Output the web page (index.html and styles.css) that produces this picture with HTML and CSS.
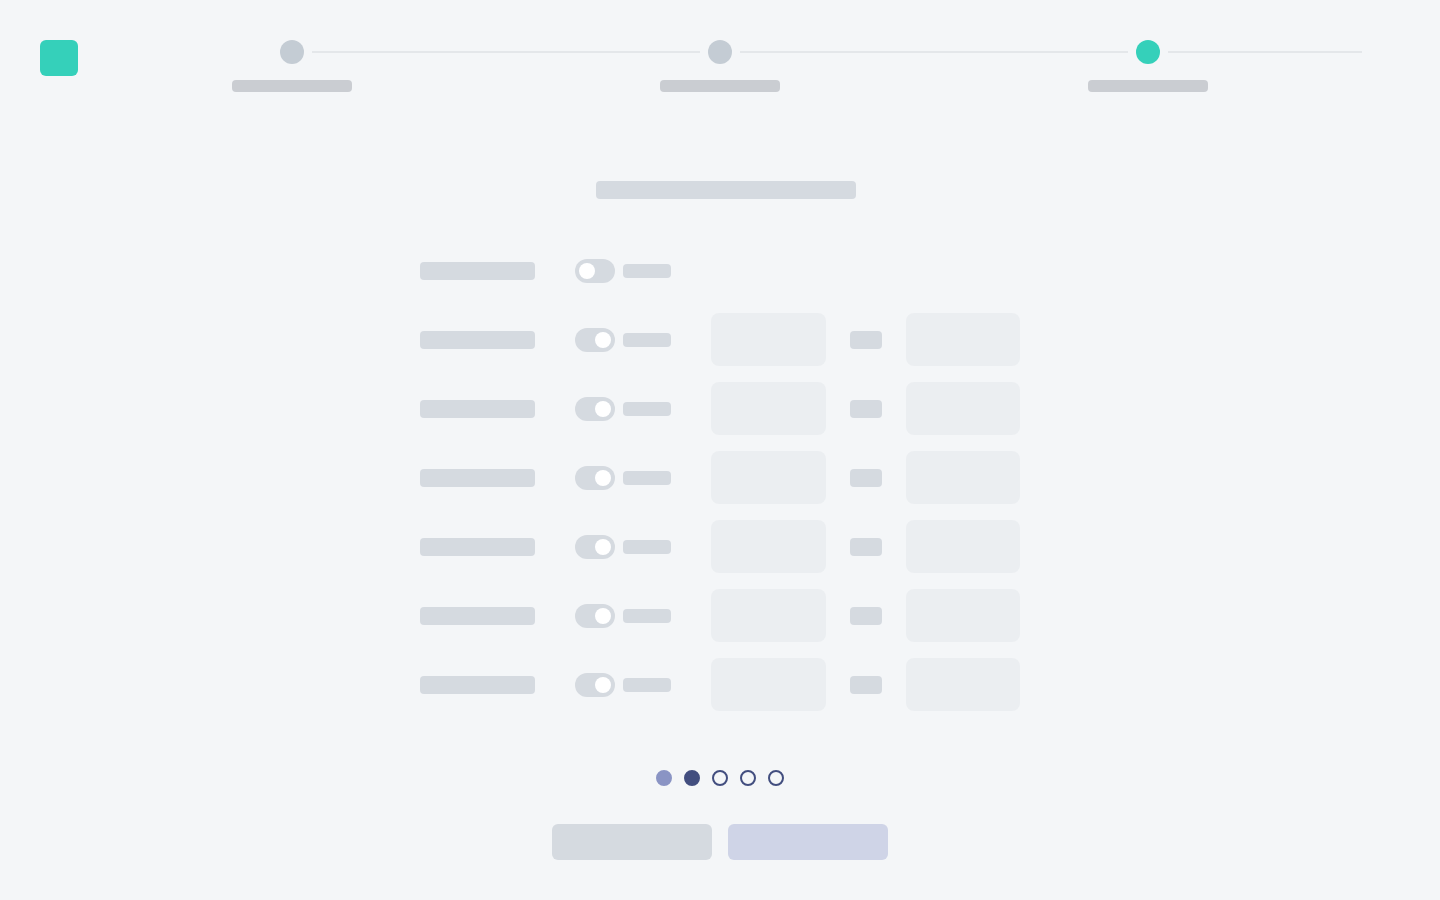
FILE: index.html
```html
<!DOCTYPE html>
<html lang="en">
<head>
  <meta charset="UTF-8">
  <meta name="viewport" content="width=device-width, initial-scale=1.0">
  <title>Opening hours</title>
  <link rel="stylesheet" href="styles.css">
</head>
<body>
  <header class="header">
    <div class="logo"></div>
    <ol class="steps">
      <li class="step"><span class="step-track"><i class="step-dot"></i></span><span class="step-label"></span></li>
      <li class="step"><span class="step-track"><i class="step-dot"></i></span><span class="step-label"></span></li>
      <li class="step active"><span class="step-track"><i class="step-dot"></i></span><span class="step-label"></span></li>
    </ol>
  </header>
  <form class="form">
    <div class="title"><span class="bar title-bar"></span></div>
    <div class="rows">
      <div class="row">
        <span class="bar"></span>
        <label class="toggle"><input type="checkbox" aria-label="Sunday"><span class="bar toggle-text"></span></label>
      </div>
      <div class="row">
        <span class="bar"></span>
        <label class="toggle"><input type="checkbox" aria-label="Monday" checked><span class="bar toggle-text"></span></label>
        <input class="field" aria-label="Monday from">
        <span class="bar"></span>
        <input class="field" aria-label="Monday to">
      </div>
      <div class="row">
        <span class="bar"></span>
        <label class="toggle"><input type="checkbox" aria-label="Tuesday" checked><span class="bar toggle-text"></span></label>
        <input class="field" aria-label="Tuesday from">
        <span class="bar"></span>
        <input class="field" aria-label="Tuesday to">
      </div>
      <div class="row">
        <span class="bar"></span>
        <label class="toggle"><input type="checkbox" aria-label="Wednesday" checked><span class="bar toggle-text"></span></label>
        <input class="field" aria-label="Wednesday from">
        <span class="bar"></span>
        <input class="field" aria-label="Wednesday to">
      </div>
      <div class="row">
        <span class="bar"></span>
        <label class="toggle"><input type="checkbox" aria-label="Thursday" checked><span class="bar toggle-text"></span></label>
        <input class="field" aria-label="Thursday from">
        <span class="bar"></span>
        <input class="field" aria-label="Thursday to">
      </div>
      <div class="row">
        <span class="bar"></span>
        <label class="toggle"><input type="checkbox" aria-label="Friday" checked><span class="bar toggle-text"></span></label>
        <input class="field" aria-label="Friday from">
        <span class="bar"></span>
        <input class="field" aria-label="Friday to">
      </div>
      <div class="row">
        <span class="bar"></span>
        <label class="toggle"><input type="checkbox" aria-label="Saturday" checked><span class="bar toggle-text"></span></label>
        <input class="field" aria-label="Saturday from">
        <span class="bar"></span>
        <input class="field" aria-label="Saturday to">
      </div>
    </div>
    <ol class="dots">
      <li class="dot done"></li>
      <li class="dot current"></li>
      <li class="dot"></li>
      <li class="dot"></li>
      <li class="dot"></li>
    </ol>
    <div class="actions">
      <button class="btn" type="button" aria-label="Back"></button>
      <button class="btn btn-next" aria-label="Next"></button>
    </div>
  </form>
</body>
</html>
```

FILE: styles.css
```css
* {
  box-sizing: border-box;
}
body {
  margin: 0;
  background: #f4f6f8;
  font-family: "Open Sans", sans-serif;
}
ol {
  list-style: none;
  margin: 0;
  padding: 0;
}

/* header */
.header {
  display: grid;
  grid-template-columns: 38px 1fr 38px;
  padding: 40px 40px 0;
}
.logo {
  height: 36px;
  border-radius: 6px;
  background: #35d0ba;
}
.steps {
  display: grid;
  grid-template-columns: repeat(3, 1fr);
}
.step {
  display: flex;
  flex-direction: column;
  align-items: center;
  gap: 16px;
}
.step-track {
  display: grid;
  grid-template-columns: 1fr 24px 1fr;
  column-gap: 8px;
  align-items: center;
  width: 100%;
}
.step-track::before,
.step-track::after {
  content: "";
  height: 2px;
  background: #e4e7ea;
}
.step:first-child .step-track::before {
  background: none;
}
.step-dot {
  height: 24px;
  border-radius: 50%;
  background: #c4ccd4;
}
.step.active .step-dot {
  background: #35d0ba;
}
.step-label {
  width: 120px;
  height: 12px;
  border-radius: 4px;
  background: #cacdd2;
}

/* form */
.form {
  max-width: 600px;
  margin: 0 auto;
  padding: 87px 0 40px;
}
.bar {
  height: 18px;
  border-radius: 4px;
  background: #d5dae0;
}
.title {
  display: flex;
  align-items: center;
  justify-content: center;
  height: 21px;
  margin-bottom: 44px;
  padding-left: 11px;
}
.title-bar {
  width: 260px;
}
.rows {
  display: flex;
  flex-direction: column;
  gap: 16px;
}
.row {
  display: grid;
  grid-template-columns: 115px 128px 1fr 32px 1fr;
  column-gap: 24px;
  align-items: center;
  min-height: 53px;
}
.toggle {
  display: flex;
  align-items: center;
  gap: 8px;
  padding-left: 16px;
}
.toggle input {
  appearance: none;
  display: flex;
  width: 40px;
  height: 24px;
  margin: 0;
  padding: 4px;
  border-radius: 12px;
  background: #d5dae0;
}
.toggle input::before {
  content: "";
  width: 16px;
  height: 16px;
  border-radius: 50%;
  background: #fff;
}
.toggle input:checked {
  justify-content: flex-end;
}
.toggle-text {
  width: 48px;
  height: 14px;
}
.field {
  width: 100%;
  height: 53px;
  padding: 0 16px;
  border: 0;
  border-radius: 8px;
  background: #ebeef1;
  font: inherit;
}

/* footer */
.dots {
  display: flex;
  justify-content: center;
  gap: 12px;
  margin-top: 59px;
}
.dot {
  width: 16px;
  height: 16px;
  border: 2px solid #424e7f;
  border-radius: 50%;
}
.dot.current {
  background: #424e7f;
}
.dot.done {
  border-color: #8a94c4;
  background: #8a94c4;
}
.actions {
  display: flex;
  justify-content: center;
  gap: 16px;
  margin-top: 38px;
}
.btn {
  width: 160px;
  height: 36px;
  border: 0;
  border-radius: 6px;
  background: #d5dae0;
}
.btn-next {
  background: #cfd4e7;
}
```
